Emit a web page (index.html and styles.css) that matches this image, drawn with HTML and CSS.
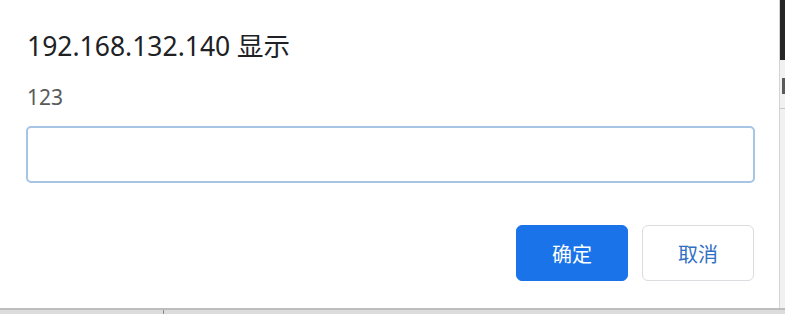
FILE: index.html
```html
<!DOCTYPE html>
<html lang="zh">
<head>
<meta charset="utf-8">
<title>192.168.132.140 显示</title>
<link rel="stylesheet" href="styles.css">
</head>
<body>
<div class="page">
  <div class="row">
    <div class="dialog">
      <div class="title">192.168.132.140 显示</div>
      <div class="message">123</div>
      <input class="field" type="text" aria-label="输入">
      <div class="actions">
        <button class="btn btn-primary">确定</button>
        <button class="btn btn-secondary">取消</button>
      </div>
    </div>
    <div class="side">
      <div class="side-dark"></div>
      <div class="side-light">
        <div class="side-mark"></div>
        <div class="side-line"></div>
      </div>
    </div>
  </div>
  <div class="bottom">
    <div class="bottom-mark"></div>
  </div>
</div>
</body>
</html>
```
FILE: styles.css
```css
html, body {
  margin: 0;
  padding: 0;
}
body {
  width: 785px;
  height: 314px;
  overflow: hidden;
  background: #ececec;
  font-family: "Noto Sans", "Noto Sans CJK SC", sans-serif;
}
.page {
  display: flex;
  flex-direction: column;
  height: 314px;
}
.row {
  display: flex;
  height: 308px;
}
.dialog {
  box-sizing: border-box;
  width: 780px;
  height: 308px;
  background: #ffffff;
  border-right: 1px solid #d4d4d4;
  padding: 30px 24px 0 26px;
  display: flex;
  flex-direction: column;
}
.title {
  font-size: 26.5px;
  line-height: 32px;
  color: #202124;
  padding-left: 1px;
}
.message {
  margin-top: 22px;
  font-size: 21px;
  line-height: 26px;
  color: #5a5a5a;
  padding-left: 1px;
}
.field {
  box-sizing: border-box;
  margin: 16px 0 0 0;
  width: 729px;
  height: 57px;
  border: 2px solid #a6c4e4;
  border-radius: 5px;
  background: #fff;
  outline: none;
  font: inherit;
}
.actions {
  margin-top: 42px;
  display: flex;
  justify-content: flex-end;
  gap: 14px;
  padding-right: 1px;
}
.btn {
  box-sizing: border-box;
  width: 112px;
  height: 56px;
  border-radius: 6px;
  font-family: "Noto Sans CJK SC", sans-serif;
  font-size: 20px;
  padding: 0;
  cursor: pointer;
}
.btn-primary {
  background: #1a73e8;
  border: 1px solid #1a73e8;
  color: #ffffff;
}
.btn-secondary {
  background: #ffffff;
  border: 1px solid #dadce0;
  color: #2f6fc4;
}
.side {
  flex: 1;
  display: flex;
  flex-direction: column;
}
.side-dark {
  height: 60px;
  background: #262626;
}
.side-light {
  flex: 1;
  background: #f1f1f1;
  display: flex;
  flex-direction: column;
}
.side-mark {
  margin: 18px 0 0 2px;
  height: 16px;
  background: #5a5a5a;
}
.side-line {
  margin-top: 14px;
  height: 1px;
  background: #c8c8c8;
}
.bottom {
  flex: 1;
  background: #dcdcdc;
  border-top: 2px solid #bdbdbd;
  display: flex;
}
.bottom-mark {
  margin-left: 163px;
  width: 1px;
  background: #8a8a8a;
}
```
